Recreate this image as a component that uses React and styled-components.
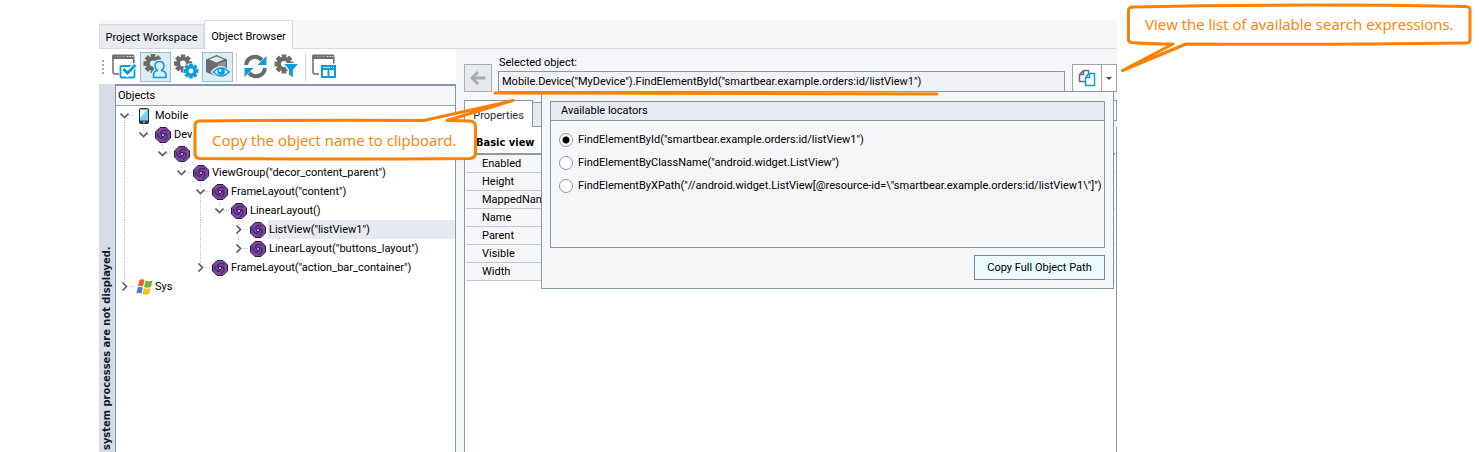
import React, { useState } from "react";
import styled, { createGlobalStyle, css } from "styled-components";

const GlobalStyle = createGlobalStyle`
  *, *::before, *::after { box-sizing: border-box; }
  body { margin: 0; background: #fff; }
  body, button, input, table {
    font-family: Roboto, "DejaVu Sans Condensed", "DejaVu Sans", sans-serif;
    font-size: 11px;
    color: #000;
  }
  button { margin: 0; padding: 0; border-radius: 0; cursor: pointer; }
`;

const line = "#8796ab";
const panel = "#f5f6f8";
const orange = "#ff8000";
const boldFont = '"DejaVu Sans Condensed", "DejaVu Sans", sans-serif';

const Page = styled.div`
  display: flex;
  min-height: 100vh;
  padding: 20px 362px 0 99px;
`;

const Window = styled.main`
  position: relative;
  flex: 1;
  min-width: 0;
  display: flex;
  flex-direction: column;
`;

const TabStrip = styled.nav`
  display: flex;
  align-items: flex-end;
  height: 29px;
  background: ${panel};
  box-shadow: inset 0 -1px #d5d9e4;
`;

const WindowTab = styled.button`
  height: ${(p) => (p.$active ? 29 : 25)}px;
  width: ${(p) => (p.$active ? 89 : 105)}px;
  padding-top: 2px;
  text-align: center;
  border: 1px solid #d5d9e4;
  border-bottom-width: ${(p) => (p.$active ? 0 : 1)}px;
  background: ${(p) => (p.$active ? "#fff" : "#e8ebf0")};
  white-space: nowrap;
`;

const Body = styled.div`
  flex: 1;
  display: grid;
  grid-template-columns: 357px minmax(0, 1fr);
`;

const Left = styled.section`
  display: flex;
  flex-direction: column;
  background: #fff;
`;

const Toolbar = styled.div`
  display: flex;
  align-items: center;
  height: 35px;
  padding-left: 3px;
`;

const Grip = styled.span`
  width: 2px;
  height: 14px;
  margin-right: 5px;
  background: repeating-linear-gradient(#a9a9a9 0 2px, transparent 2px 4px);
`;

const ToolButton = styled.button`
  display: grid;
  place-items: center;
  width: 31px;
  height: 30px;
  border: 1px solid ${(p) => (p.$on ? "#93bccf" : "transparent")};
  background: ${(p) => (p.$on ? "#dbedf2" : "transparent")};
`;

const Divider = styled.span`
  width: 1px;
  height: 28px;
  margin: 0 3px;
  background: #d0d4da;
`;

const Explorer = styled.div`
  flex: 1;
  display: grid;
  grid-template-columns: 16px minmax(0, 1fr);
`;

const Banner = styled.div`
  writing-mode: vertical-rl;
  transform: rotate(180deg);
  padding-top: 2px;
  line-height: 16px;
  font-family: ${boldFont};
  font-weight: 700;
  font-size: 11px;
  white-space: nowrap;
  color: #15182b;
  background: #d5dde5;
`;

const TreePanel = styled.div`
  border: solid ${line};
  border-width: 2px 1px 0 1px;
`;

const TreeHeader = styled.h2`
  margin: 0;
  padding-left: 2px;
  height: 20px;
  line-height: 20px;
  font-size: 11px;
  font-weight: 400;
  background: ${panel};
  border-bottom: 1px solid #a0a5ad;
`;

const Tree = styled.ul`
  list-style: none;
  margin: 0;
  padding: 0;
`;

const TreeRow = styled.li`
  display: flex;
  height: 19px;
`;

const dots = (dir) =>
  `repeating-linear-gradient(${dir}, #c4c4c4 0 1px, transparent 1px 2px)`;

const guideSize = { none: "0", top: "50%", full: "100%", bottom: "50%" };

const Guide = styled.span`
  display: grid;
  place-items: center;
  width: 19px;
  flex: none;
  background: ${dots("to bottom")} no-repeat 8px
    ${(p) => (p.$line === "bottom" ? "100%" : "0")} / 1px ${(p) => guideSize[p.$line]};
  ${(p) =>
    p.$node &&
    css`
      background: ${dots("to right")} no-repeat 100% 9px / 6px 1px,
        ${dots("to bottom")} no-repeat 8px ${p.$line === "bottom" ? "100%" : "0"} / 1px
          ${guideSize[p.$line]};
    `}
`;

const Toggle = styled.button`
  display: grid;
  margin-right: 2px;
  border: 0;
  background: #fff;
`;

const NodeIcon = styled.span`
  display: grid;
  place-items: center start;
  width: 19px;
  padding-left: 1px;
  flex: none;
`;

const NodeLabel = styled.span`
  flex: ${(p) => (p.$selected ? 1 : "none")};
  padding-left: 1px;
  line-height: 20px;
  white-space: nowrap;
  background: ${(p) => (p.$selected ? "#e6e9ef" : "transparent")};
`;

const Right = styled.section`
  display: flex;
  flex-direction: column;
  padding: 7px 0 0 8px;
  background: ${panel};
`;

const ObjectBar = styled.div`
  position: relative;
  display: flex;
  align-items: flex-end;
  height: 36px;
  z-index: 1;
`;

const BackButton = styled.button`
  display: grid;
  place-items: center;
  width: 28px;
  height: 28px;
  border: 1px solid #abaeb3;
  background: #e6e9ee;
`;

const Field = styled.div`
  flex: 1;
  display: flex;
  flex-direction: column;
  margin: 0 7px 0 6px;
`;

const FieldLabel = styled.label`
  line-height: 14px;
  padding: 0 0 1px 1px;
`;

const PathInput = styled.input`
  width: 100%;
  height: 21px;
  padding: 0 3px;
  border: 1px solid ${line};
  background: #f0f2f5;
  outline: 0;
`;

const SplitButton = styled.button`
  display: grid;
  place-items: center;
  width: ${(p) => p.$width}px;
  height: 28px;
  border: 1px solid #a5a5a5;
  background: #fff;
  & + & { border-left: 0; }
`;

const Popup = styled.div`
  position: absolute;
  top: 35px;
  left: 77px;
  right: 3px;
  padding: 9px 8px 8px;
  display: flex;
  flex-direction: column;
  align-items: flex-end;
  gap: 7px;
  border: 1px solid ${line};
  background: ${panel};
`;

const Locators = styled.section`
  width: 100%;
  height: 147px;
  border: 1px solid ${line};
`;

const LocatorsTitle = styled.h3`
  margin: 0 0 7px;
  padding-left: 10px;
  line-height: 18px;
  font-size: 11px;
  font-weight: 400;
  background: #e7eaf0;
  border-bottom: 1px solid ${line};
`;

const Option = styled.label`
  display: flex;
  align-items: center;
  gap: 5px;
  height: 23px;
  padding-left: 8px;
  white-space: nowrap;
`;

const Radio = styled.input`
  appearance: none;
  flex: none;
  width: 14px;
  height: 14px;
  margin: 0;
  border: 1px solid #8c98ab;
  border-radius: 50%;
  background: #fff;
  &:checked { background: radial-gradient(circle, #000 0 3px, #fff 4px); }
`;

const CopyButton = styled.button`
  width: 131px;
  height: 25px;
  border: 1px solid #71879c;
  background: #ebfbff;
`;

const PropertyTabs = styled.div`
  display: flex;
  align-items: flex-end;
  height: 27px;
  margin-top: 8px;
`;

const PropertyTab = styled.button`
  width: 69px;
  height: 27px;
  padding-top: 2px;
  border: 1px solid ${line};
  border-bottom: 0;
  background: #fff;
  color: #2b2b3c;
`;

const TabRest = styled.div`
  flex: 1;
  height: 25px;
  border: solid ${line};
  border-width: 1px 0;
  background: #e6eaf0;
`;

const TabMenu = styled.button`
  align-self: flex-start;
  width: 20px;
  height: 21px;
  border: 1px solid ${line};
  background: #fff;
`;

const Sheet = styled.div`
  flex: 1;
  padding: 4px 1px 0;
  border: solid ${line};
  border-width: 0 1px;
  background: #fff;
`;

const PropertyTable = styled.table`
  width: 100%;
  border-collapse: separate;
  border-spacing: 0;
  caption {
    height: 24px;
    line-height: 23px;
    padding-left: 10px;
    text-align: left;
    font-family: ${boldFont};
    font-weight: 700;
    border-bottom: 2px solid #9097a3;
  }
  th {
    height: 18px;
    padding: 0 0 0 16px;
    text-align: left;
    font-weight: 400;
    line-height: 17px;
    background: ${panel};
    border-bottom: 1px solid #c5c8cc;
  }
`;

const calloutText = css`
  font-family: "Open Sans", "Noto Sans", sans-serif;
  font-size: 15px;
  line-height: 20px;
  color: ${orange};
  white-space: nowrap;
`;

const Callout = styled.aside`
  position: absolute;
  z-index: 3;
  top: ${(p) => p.$top}px;
  left: ${(p) => p.$left};
  width: ${(p) => p.$width}px;
  height: ${(p) => p.$height}px;
  svg { position: absolute; inset: 0; }
  p {
    position: relative;
    margin: 0;
    padding: ${(p) => p.$pad};
    ${calloutText}
  }
`;

const Underline = styled.svg`
  position: absolute;
  z-index: 2;
  left: 28px;
  top: 33px;
`;

const grey = "#6b6b6b";
const blue = "#0c9de0";

function Gear({ x, y, r, color, hole = "#fff" }) {
  const t = r * 0.5;
  return (
    <g transform={`translate(${x} ${y})`} fill={color}>
      {[0, 45, 90, 135].map((a) => (
        <rect key={a} x={-t / 2} y={-r} width={t} height={r * 2} transform={`rotate(${a})`} />
      ))}
      <circle r={r * 0.74} />
      <circle r={r * 0.32} fill={hole} />
    </g>
  );
}

function Frame() {
  return (
    <g>
      <path d="M7 20H3Q1 20 1 18V3" fill="none" stroke={grey} strokeWidth="1.500" />
      <path d="M.2 1.500Q.2.5 1.500.5H21Q22.500.5 22.500 2V9.500H21V5H.2z" fill={grey} />
      <path d="M3 2.700h11" stroke="#8f8f8f" strokeWidth="1" />
      <path d="M15 2.500h1.300M17.500 2.500h1.300M20 2.500h1.300" stroke="#fff" strokeWidth="1.200" />
    </g>
  );
}

const Icon = ({ children }) => (
  <svg width="25" height="25" viewBox="0 0 25 25" aria-hidden="true">{children}</svg>
);

const icons = {
  check: (
    <Icon>
      <Frame />
      <rect x="8.500" y="12" width="14" height="11.500" rx="1" fill="#fff" stroke={blue} strokeWidth="1.800" />
      <path d="M11 15.500l4 4.500 8-9" fill="none" stroke="#fff" strokeWidth="5" />
      <path d="M11.500 15l4 4 8-8" fill="none" stroke={blue} strokeWidth="3" />
    </Icon>
  ),
  user: (
    <Icon>
      <Gear x={10} y={9.500} r={9.500} color={grey} hole="#dbedf2" />
      <path d="M10.500 23.500V20.500Q10.500 17.500 14.500 16.500 12 14.500 12 12 12 7.500 16.500 7.500T21 12Q21 14.500 18.500 16.500 23 17.500 23 20.500V23.500z" fill="#dbedf2" stroke="#dbedf2" strokeWidth="4" />
      <path d="M10.500 23.500V20.500Q10.500 17.500 14.500 16.500 12 14.500 12 12 12 7.500 16.500 7.500T21 12Q21 14.500 18.500 16.500 23 17.500 23 20.500V23.500z" fill="#dbedf2" stroke={blue} strokeWidth="1.600" strokeLinejoin="round" />
    </Icon>
  ),
  gears: (
    <Icon>
      <Gear x={9} y={9.500} r={9} color={grey} />
      <circle cx="17" cy="17" r="8" fill="#fff" />
      <Gear x={17} y={17} r={7.500} color={blue} />
    </Icon>
  ),
  cube: (
    <Icon>
      <path d="M1 5.500L11.500 1 22 5.500v12L11.500 22.500 1 18z" fill={grey} />
      <path d="M4 5.500l7.500-3 7.500 3-7.500 3z" fill="#dbedf2" />
      <path d="M13 10l7.500-3v7.500l-7.500 4z" fill="#8d9699" />
      <path d="M7.500 18q8-9 16.500 0-8 9-16.500 0z" fill="#dbedf2" stroke="#dbedf2" strokeWidth="3" />
      <path d="M8.500 18q7.500-8 15.500 0-8 8-15.500 0z" fill="#dbedf2" stroke={blue} strokeWidth="1.600" />
      <circle cx="16.200" cy="17.500" r="3.600" fill={blue} />
      <circle cx="15.200" cy="16.500" r="1.200" fill="#fff" />
    </Icon>
  ),
  refresh: (
    <Icon>
      <path d="M3 11C4 3 13 0 19 6" fill="none" stroke={grey} strokeWidth="4" />
      <path d="M22 14c-1 8-10 11-16 5" fill="none" stroke={grey} strokeWidth="4" />
      <path d="M23.500 2v9H14.500z M1.500 23v-9h9z" fill={blue} />
    </Icon>
  ),
  filter: (
    <Icon>
      <Gear x={10} y={10} r={9.500} color={grey} />
      <path d="M9 9.500h16l-5.500 6.500v8.500l-5-3.500v-5z" fill={blue} stroke="#fff" strokeWidth="1.200" />
    </Icon>
  ),
  layout: (
    <Icon>
      <Frame />
      <path d="M9 11h15v13H9z" fill={blue} />
      <path d="M11 16h4.500v6H11zM17.500 16H22v6h-4.500z" fill="#fff" />
      <path d="M11 13.500h7M19 13.500h1M21 13.500h1" stroke="#bfe6f7" />
    </Icon>
  ),
};

const nodeIcons = {
  phone: (
    <svg width="16" height="16" viewBox="-3 0 16 16" aria-hidden="true">
      <rect x=".5" y=".5" width="9" height="15" rx="1" fill="#2f3d49" stroke="#27323c" />
      <path d="M1 1.500h8v11H1z" fill="#79d0ee" />
      <path d="M1 1.500h7.500L1 10z" fill="#d6f4fc" />
      <path d="M4 14.200h2" stroke="#e8eef2" />
    </svg>
  ),
  object: (
    <svg width="16" height="16" viewBox="0 0 16 16" aria-hidden="true">
      <path d="M5 .5h6L15.500 5v6L11 15.500H5L.5 11V5z" fill="#7a48a3" stroke="#2c183f" />
      <g fill="none" stroke="#4a2169" strokeWidth="1.300">
        <path d="M5.500 7.500C5 4 9 2 12.500 4.500" />
        <path d="M5.500 7.500C5 4 9 2 12.500 4.500" transform="rotate(120 8 8)" />
        <path d="M5.500 7.500C5 4 9 2 12.500 4.500" transform="rotate(240 8 8)" />
      </g>
      <circle cx="8" cy="8" r="1.700" fill="#b79ccf" stroke="#3d1b5b" />
    </svg>
  ),
  windows: (
    <svg width="17" height="16" viewBox="0 0 17 16" aria-hidden="true">
      <path d="M3.500 1Q6-.5 8.500 1L7 7.500Q4.500 6 2 7.500z" fill="#e8602c" />
      <path d="M9.500 1.500Q12.500 3 16.500 1.500l-1.500 6.500Q11 9.500 8 8z" fill="#75b536" />
      <path d="M1.800 8.500Q4 7 6.800 8.500L5.500 14.500Q3 13 .3 14.500z" fill="#3f7fdc" />
      <path d="M7.800 9Q11 10.500 14.700 9l-1.500 6Q9.500 16.500 6.500 15z" fill="#f4c51d" />
    </svg>
  ),
};

const nodes = [
  { label: "Mobile", icon: "phone", open: true, lines: ["bottom"] },
  { label: "Dev", icon: "object", open: true, lines: ["full", "top"] },
  { label: "", icon: "object", open: true, lines: ["full", "none", "top"] },
  { label: 'ViewGroup("decor_content_parent")', icon: "object", open: true, lines: ["full", "none", "none", "top"] },
  { label: 'FrameLayout("content")', icon: "object", open: true, lines: ["full", "none", "none", "none", "full"] },
  { label: "LinearLayout()", icon: "object", open: true, lines: ["full", "none", "none", "none", "full", "top"] },
  { label: 'ListView("listView1")', icon: "object", selected: true, lines: ["full", "none", "none", "none", "full", "none", "full"] },
  { label: 'LinearLayout("buttons_layout")', icon: "object", lines: ["full", "none", "none", "none", "full", "none", "top"] },
  { label: 'FrameLayout("action_bar_container")', icon: "object", lines: ["full", "none", "none", "none", "top"] },
  { label: "Sys", icon: "windows", lines: ["top"] },
];

const tools = [
  { id: "check", label: "Select objects" },
  { id: "user", label: "User processes", on: true },
  { id: "gears", label: "System processes" },
  { id: "cube", label: "Show objects", on: true },
  { divider: true },
  { id: "refresh", label: "Refresh" },
  { id: "filter", label: "Filter" },
  { divider: true },
  { id: "layout", label: "Layout" },
];

const locators = [
  'FindElementById("smartbear.example.orders:id/listView1")',
  'FindElementByClassName("android.widget.ListView")',
  'FindElementByXPath("//android.widget.ListView[@resource-id=\\"smartbear.example.orders:id/listView1\\"]")',
];

const properties = ["Enabled", "Height", "MappedName", "Name", "Parent", "Visible", "Width"];

function TreeNode({ node }) {
  return (
    <TreeRow role="treeitem" aria-level={node.lines.length} aria-selected={!!node.selected} aria-expanded={!!node.open}>
      {node.lines.map((l, i) => {
        const own = i === node.lines.length - 1;
        return (
          <Guide key={i} $line={l} $node={own}>
            {own && (
              <Toggle aria-label={node.open ? "Collapse" : "Expand"}>
                <svg width="9" height="9" viewBox="0 0 9 9" fill="none" stroke="#5c5c5c" strokeWidth="1.600">
                  <path d={node.open ? "M.5 2.500l4 4 4-4" : "M2.500.5l4 4-4 4"} />
                </svg>
              </Toggle>
            )}
          </Guide>
        );
      })}
      <NodeIcon>{nodeIcons[node.icon]}</NodeIcon>
      <NodeLabel $selected={node.selected}>{node.label}</NodeLabel>
    </TreeRow>
  );
}

export default function App() {
  const [locator, setLocator] = useState(0);
  return (
    <Page>
      <GlobalStyle />
      <Window>
        <TabStrip>
          <WindowTab>Project Workspace</WindowTab>
          <WindowTab $active>Object Browser</WindowTab>
        </TabStrip>
        <Body>
          <Left>
            <Toolbar>
              <Grip />
              {tools.map((t, i) =>
                t.divider ? (
                  <Divider key={i} />
                ) : (
                  <ToolButton key={i} $on={t.on} aria-label={t.label}>{icons[t.id]}</ToolButton>
                )
              )}
            </Toolbar>
            <Explorer>
              <Banner>system processes are not displayed.</Banner>
              <TreePanel>
                <TreeHeader>Objects</TreeHeader>
                <Tree role="tree">
                  {nodes.map((n, i) => <TreeNode key={i} node={n} />)}
                </Tree>
              </TreePanel>
            </Explorer>
          </Left>
          <Right>
            <ObjectBar>
              <BackButton aria-label="Back">
                <svg width="16" height="14" viewBox="0 0 16 14" fill="none" stroke="#a9abae" strokeWidth="3">
                  <path d="M8 1L2 7l6 6M2.500 7H15.500" />
                </svg>
              </BackButton>
              <Field>
                <FieldLabel htmlFor="path">Selected object:</FieldLabel>
                <PathInput id="path" readOnly value={'Mobile.Device("MyDevice").FindElementById("smartbear.example.orders:id/listView1")'} />
              </Field>
              <SplitButton $width={30} aria-label="Copy">
                <svg width="18" height="18" viewBox="0 0 18 18" strokeWidth="1.500">
                  <path d="M5.500 1.500H10.500V12.500H1.500V5.500zM5.500 1.500V5.500H1.500" fill="#fff" stroke={grey} />
                  <path d="M11 4.500H16.500V16.500H7.500V8.500zM11.500 4.500V8.500H7.500" fill="#fff" stroke={blue} />
                </svg>
              </SplitButton>
              <SplitButton $width={15} aria-label="Search expressions">
                <svg width="6" height="3" viewBox="0 0 6 3"><path d="M0 0h6L3 3z" fill="#4a4a4a" /></svg>
              </SplitButton>
              <Popup>
                <Locators>
                  <LocatorsTitle>Available locators</LocatorsTitle>
                  {locators.map((text, i) => (
                    <Option key={i}>
                      <Radio type="radio" name="locator" checked={locator === i} onChange={() => setLocator(i)} />
                      {text}
                    </Option>
                  ))}
                </Locators>
                <CopyButton>Copy Full Object Path</CopyButton>
              </Popup>
              <Underline width="450" height="8" viewBox="0 0 450 8" aria-hidden="true">
                <path d="M3 4L445 5" stroke={orange} strokeWidth="3" strokeLinecap="round" />
              </Underline>
            </ObjectBar>
            <PropertyTabs>
              <PropertyTab>Properties</PropertyTab>
              <TabRest />
              <TabMenu aria-label="More tabs" />
            </PropertyTabs>
            <Sheet>
              <PropertyTable>
                <caption>Basic view</caption>
                <tbody>
                  {properties.map((p) => (
                    <tr key={p}><th scope="row">{p}</th></tr>
                  ))}
                </tbody>
              </PropertyTable>
            </Sheet>
          </Right>
        </Body>
        <Callout $top={78} $left="93px" $width={325} $height={64} $pad="32px 0 0 20px">
          <svg width="325" height="64" viewBox="0 0 325 64" fill="#fff" stroke={orange} strokeWidth="3" strokeLinejoin="round" aria-hidden="true">
            <path d="M7 23Q120 22 232 22.500L321 2.500 255 22.500 278 23Q283.500 23.500 283.500 29V55Q283.500 60 278 60.500Q140 61.500 8 60.500Q3 60 3 56V28Q3 23 7 23z" />
          </svg>
          <p>Copy the object name to clipboard.</p>
        </Callout>
        <Callout $top={-20} $left="calc(100% + 2px)" $width={355} $height={76} $pad="14px 0 0 26px">
          <svg width="355" height="76" viewBox="0 0 355 76" fill="#fff" stroke={orange} strokeWidth="3" strokeLinejoin="round" aria-hidden="true">
            <path d="M15 7Q180 3.500 346 6.500Q351 7 351 9V40Q351 43 346 43Q200 45 67 44L3.500 70.500 54 44Q30 44 13 42.500Q9.500 42 9.500 40V10Q9.500 7 15 7z" />
          </svg>
          <p>View the list of available search expressions.</p>
        </Callout>
      </Window>
    </Page>
  );
}
